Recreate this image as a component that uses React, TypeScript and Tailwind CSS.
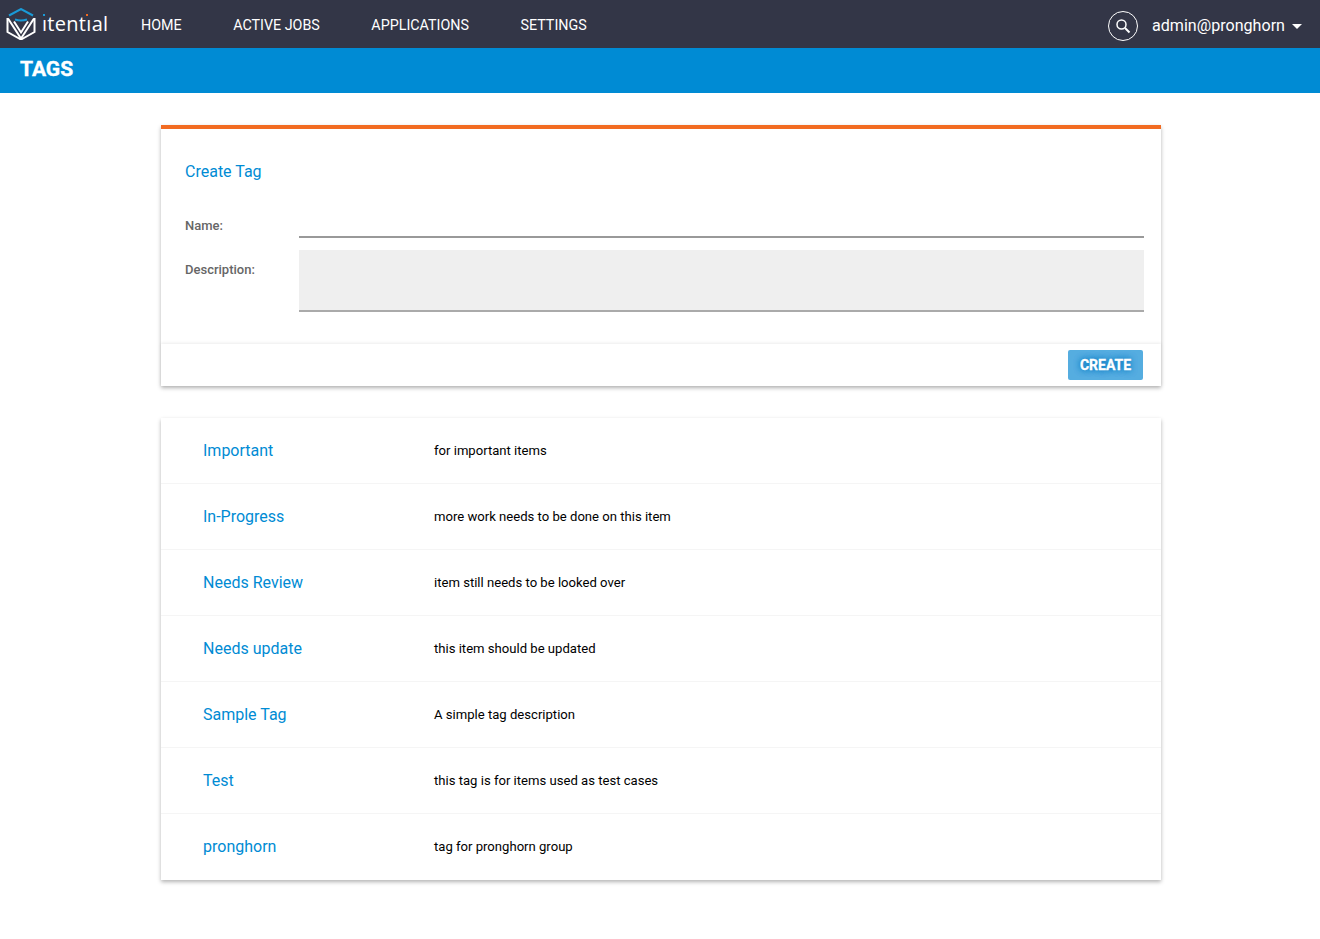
const navItems = ['HOME', 'ACTIVE JOBS', 'APPLICATIONS', 'SETTINGS']

const tags = [
  { name: 'Important', description: 'for important items' },
  { name: 'In-Progress', description: 'more work needs to be done on this item' },
  { name: 'Needs Review', description: 'item still needs to be looked over' },
  { name: 'Needs update', description: 'this item should be updated' },
  { name: 'Sample Tag', description: 'A simple tag description' },
  { name: 'Test', description: 'this tag is for items used as test cases' },
  { name: 'pronghorn', description: 'tag for pronghorn group' },
]

function Logo() {
  return (
    <svg width="30" height="32" viewBox="6 8 30 32" fill="none" className="shrink-0">
      <path d="M9 15.5 21 9l12 6.5" stroke="#1a9ad6" strokeWidth="2" />
      <path d="M15 19.5q6 2 12 0" stroke="#1a9ad6" strokeWidth="2" />
      <path d="M7.5 18v14l13.5 7.5L34.5 32V18" stroke="#fff" strokeWidth="2" />
      <path d="M8 18.5 21 38.5 34 18.5M14 21.5l7 11 7-11" stroke="#fff" strokeWidth="2" />
    </svg>
  )
}

function SearchIcon() {
  return (
    <div className="flex h-[30px] w-[30px] items-center justify-center rounded-full border border-white">
      <svg width="16" height="16" viewBox="0 0 16 16" fill="none" stroke="#fff">
        <circle cx="6.5" cy="6.5" r="4.5" strokeWidth="1.5" />
        <path d="M10 10l4.5 4.5" strokeWidth="2" />
      </svg>
    </div>
  )
}

export default function App() {
  return (
    <div className="min-h-[939px] bg-white font-['Roboto',sans-serif]">
      <header className="flex h-12 items-center bg-[#333647] pt-1 text-white">
        <div className="ml-[6px] -mt-1 flex w-[135px] items-center gap-[6px]">
          <Logo />
          <span className="relative font-['Open_Sans',sans-serif] text-[20px] leading-none tracking-[0.3px]">
            ıtentıal
            <span className="absolute left-[1px] top-[0px] h-[2px] w-[2px] bg-[#1a9ad6]" />
            <span className="absolute left-[44px] top-[0px] h-[2px] w-[2px] bg-[#f26b21]" />
          </span>
        </div>
        <nav className="flex items-center gap-[51.5px] text-[14.3px]">
          {navItems.map((item) => (
            <span key={item}>{item}</span>
          ))}
        </nav>
        <div className="ml-auto mr-[18px] flex items-center">
          <SearchIcon />
          <span className="ml-[14px] text-[16.1px]">admin@pronghorn</span>
          <span className="ml-[7px] h-0 w-0 border-x-[5px] border-t-[5px] border-x-transparent border-t-white" />
        </div>
      </header>

      <div className="flex h-[45px] items-center bg-[#008bd4] pb-[2px] pl-5 text-[21px] font-bold text-white [-webkit-text-stroke:0.4px_white]">
        TAGS
      </div>

      <main className="ml-[161px] w-[1000px] pt-8">
        <section className="border-t-4 border-[#f26b21] shadow-[0_2px_4px_rgba(0,0,0,0.3)]">
          <div className="pb-8 pl-6 pr-[17px] pt-[33px]">
            <h2 className="text-[16px] leading-[20px] text-[#008bd4]">Create Tag</h2>
            <div className="mt-[19px] flex h-[37px] items-start">
              <label className="w-[114px] pt-[15px] text-[13px] font-medium text-[#666]">Name:</label>
              <div className="h-[37px] flex-1 border-b-2 border-[#999]" />
            </div>
            <div className="mt-[12px] flex items-start">
              <label className="w-[114px] pt-[10px] text-[13px] font-medium text-[#666]">Description:</label>
              <div className="h-[62px] flex-1 border-b-2 border-[#aaa] bg-[#efefef]" />
            </div>
          </div>
          <div className="flex h-[42px] items-center justify-end pr-[18px] shadow-[0_-1px_3px_rgba(0,0,0,0.08)]">
            <button className="flex h-[30px] w-[75px] items-center justify-center rounded-[2px] bg-[#55ade0] text-[14px] font-bold text-white [-webkit-text-stroke:0.3px_white] [text-shadow:0_0_6px_#0a7cc4,0_0_6px_#0a7cc4]">
              CREATE
            </button>
          </div>
        </section>

        <section className="mt-8 shadow-[0_2px_4px_rgba(0,0,0,0.3)]">
          {tags.map((tag) => (
            <div key={tag.name} className="flex h-[66px] items-center border-b border-[#f5f5f5] last:border-b-0">
              <span className="ml-[42px] w-[231px] text-[16px] text-[#008bd4]">{tag.name}</span>
              <span className="text-[13.1px] text-black">{tag.description}</span>
            </div>
          ))}
        </section>
      </main>
    </div>
  )
}
